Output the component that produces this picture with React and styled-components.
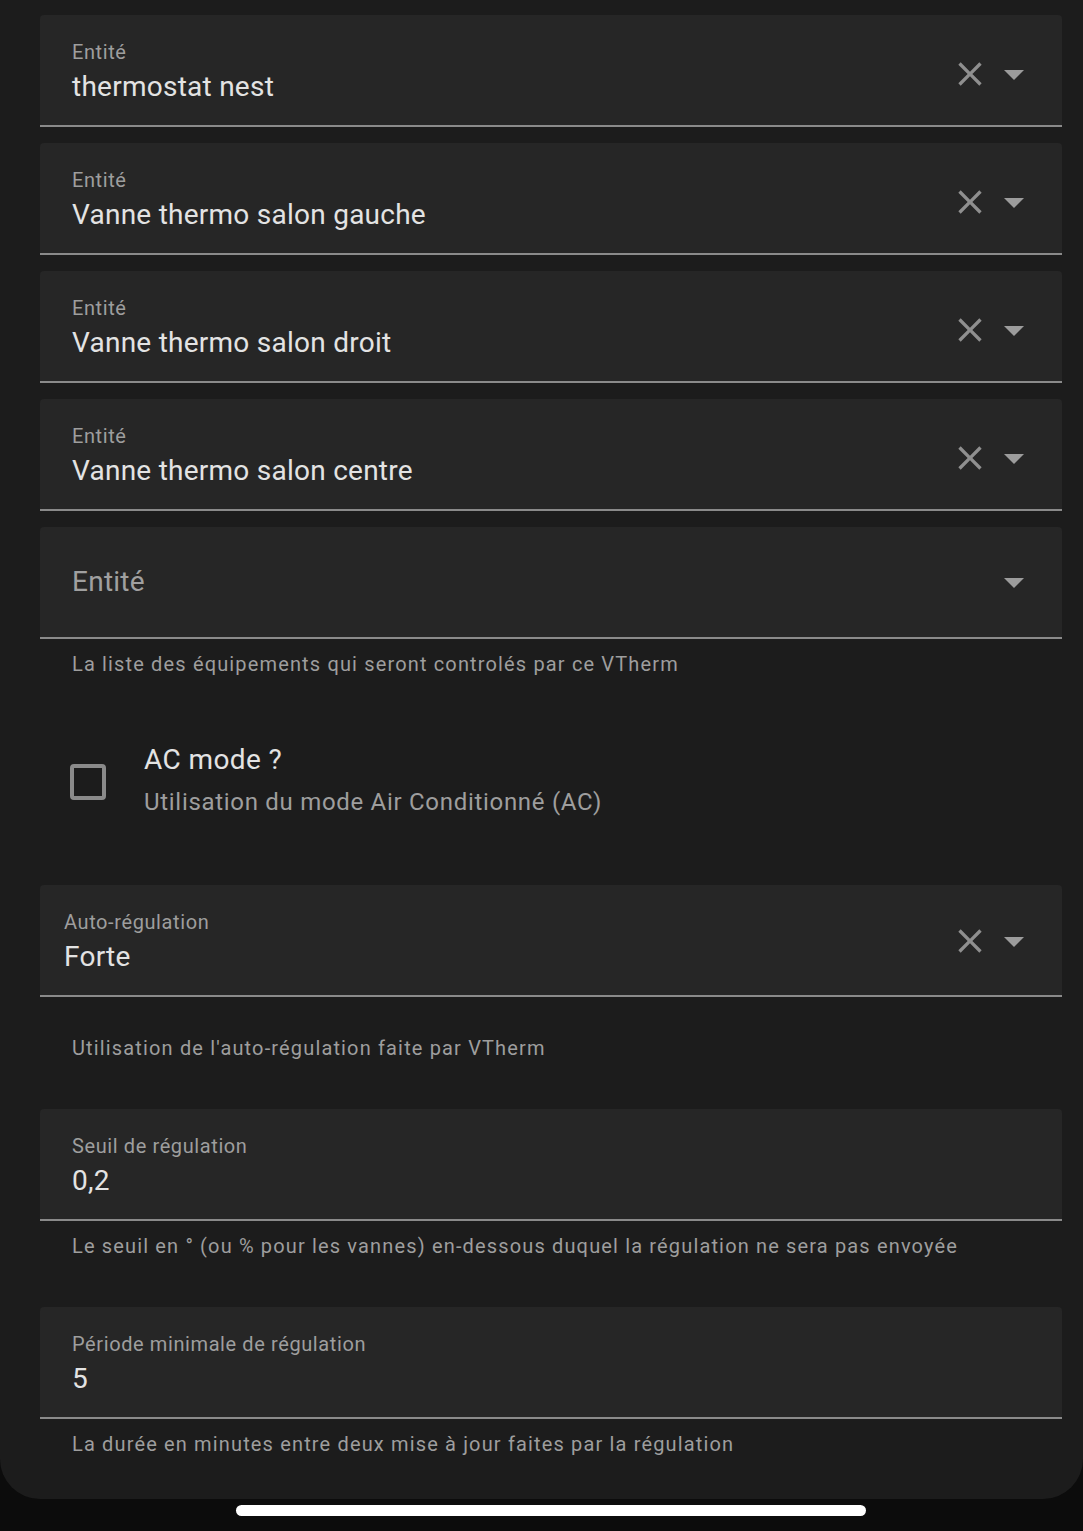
import React from "react";
import styled, { createGlobalStyle } from "styled-components";

const GlobalStyle = createGlobalStyle`
  html, body {
    margin: 0;
    padding: 0;
    background: #0c0c0c;
    font-family: Roboto, "Noto Sans", sans-serif;
    -webkit-font-smoothing: antialiased;
  }
`;

const Page = styled.div`
  width: 1083px;
  min-height: 1531px;
  background: #0c0c0c;
`;

const Panel = styled.div`
  background: #1c1c1c;
  border-radius: 0 0 40px 40px;
  padding: 15px 21px 43px 40px;
  display: flex;
  flex-direction: column;
`;

const Field = styled.div`
  box-sizing: border-box;
  height: 112px;
  margin-top: ${(p) => p.$mt || 0}px;
  background: #262626;
  border-radius: 4px 4px 0 0;
  border-bottom: 2px solid #8a8a8a;
  display: flex;
  align-items: ${(p) => (p.$empty ? "center" : "flex-start")};
  padding: 0 24px 0 ${(p) => p.$pl || 32}px;
`;

const Content = styled.div`
  flex: 1;
  display: flex;
  flex-direction: column;
  padding-top: ${(p) => (p.$empty ? 0 : 25)}px;
`;

const Label = styled.div`
  font-size: 20px;
  line-height: 24px;
  color: #9e9e9e;
  letter-spacing: 0.6px;
`;

const Value = styled.div`
  font-size: 28px;
  line-height: 34px;
  margin-top: 6px;
  color: #e3e3e3;
  letter-spacing: 0.25px;
`;

const Placeholder = styled.div`
  font-size: 28px;
  line-height: 34px;
  color: #a0a0a0;
  letter-spacing: 0.25px;
`;

const Icons = styled.div`
  display: flex;
  align-items: center;
  margin-top: ${(p) => (p.$empty ? 0 : p.$iconTop)}px;
`;

const ClearBtn = styled.div`
  width: 40px;
  height: 40px;
  display: flex;
  align-items: center;
  justify-content: center;
  color: #8f8f8f;
`;

const ArrowBtn = styled.div`
  width: 48px;
  height: 48px;
  display: flex;
  align-items: center;
  justify-content: center;
  color: #9c9c9c;
`;

const Helper = styled.div`
  margin-top: ${(p) => p.$mt}px;
  padding-left: 32px;
  font-size: 20px;
  line-height: 24px;
  letter-spacing: 1.15px;
  color: #9e9e9e;
`;

const CheckRow = styled.div`
  margin-top: 68px;
  display: flex;
  align-items: center;
`;

const CheckBox = styled.div`
  box-sizing: border-box;
  width: 36px;
  height: 36px;
  margin-left: 30px;
  margin-top: 2px;
  border: 4px solid #8a8a8a;
  border-radius: 4px;
`;

const CheckText = styled.div`
  margin-left: 38px;
  display: flex;
  flex-direction: column;
`;

const CheckTitle = styled.div`
  font-size: 28px;
  line-height: 32px;
  color: #e3e3e3;
  letter-spacing: 0.4px;
`;

const CheckSub = styled.div`
  margin-top: 11px;
  font-size: 24px;
  line-height: 30px;
  color: #9e9e9e;
  letter-spacing: 0.7px;
`;

const HomeBar = styled.div`
  margin: 6px 0 0 236px;
  width: 630px;
  height: 11px;
  border-radius: 6px;
  background: #ffffff;
`;

const CloseIcon = () => (
  <svg width="40" height="40" viewBox="0 0 24 24" fill="currentColor">
    <path d="M19,6.41L17.59,5L12,10.59L6.41,5L5,6.41L10.59,12L5,17.59L6.41,19L12,13.41L17.59,19L19,17.59L13.41,12L19,6.41Z" />
  </svg>
);

const MenuDown = () => (
  <svg width="48" height="48" viewBox="0 0 24 24" fill="currentColor">
    <path d="M7,10L12,15L17,10H7Z" />
  </svg>
);

const PickerField = ({ label, value, mt, pl, iconTop = 35 }) => {
  const empty = !value;
  return (
    <Field $mt={mt} $pl={pl} $empty={empty}>
      <Content $empty={empty}>
        {empty ? (
          <Placeholder>{label}</Placeholder>
        ) : (
          <>
            <Label>{label}</Label>
            <Value>{value}</Value>
          </>
        )}
      </Content>
      <Icons $empty={empty} $iconTop={iconTop}>
        {!empty && (
          <ClearBtn>
            <CloseIcon />
          </ClearBtn>
        )}
        <ArrowBtn>
          <MenuDown />
        </ArrowBtn>
      </Icons>
    </Field>
  );
};

const TextField = ({ label, value, mt }) => (
  <Field $mt={mt}>
    <Content>
      <Label>{label}</Label>
      <Value>{value}</Value>
    </Content>
  </Field>
);

const entities = [
  "thermostat nest",
  "Vanne thermo salon gauche",
  "Vanne thermo salon droit",
  "Vanne thermo salon centre",
];

const App = () => {
  return (
    <Page>
      <GlobalStyle />
      <Panel>
        {entities.map((name, i) => (
          <PickerField key={name} label="Entité" value={name} mt={i === 0 ? 0 : 16} />
        ))}
        <PickerField label="Entité" value="" mt={16} />
        <Helper $mt={13}>La liste des équipements qui seront controlés par ce VTherm</Helper>

        <CheckRow>
          <CheckBox />
          <CheckText>
            <CheckTitle>AC mode ?</CheckTitle>
            <CheckSub>Utilisation du mode Air Conditionné (AC)</CheckSub>
          </CheckText>
        </CheckRow>

        <PickerField label="Auto-régulation" value="Forte" mt={68} pl={24} iconTop={32} />
        <Helper $mt={39}>Utilisation de l'auto-régulation faite par VTherm</Helper>

        <TextField label="Seuil de régulation" value="0,2" mt={49} />
        <Helper $mt={13}>
          Le seuil en ° (ou % pour les vannes) en-dessous duquel la régulation ne sera pas envoyée
        </Helper>

        <TextField label="Période minimale de régulation" value="5" mt={49} />
        <Helper $mt={13}>La durée en minutes entre deux mise à jour faites par la régulation</Helper>
      </Panel>
      <HomeBar />
    </Page>
  );
};

export default App;
